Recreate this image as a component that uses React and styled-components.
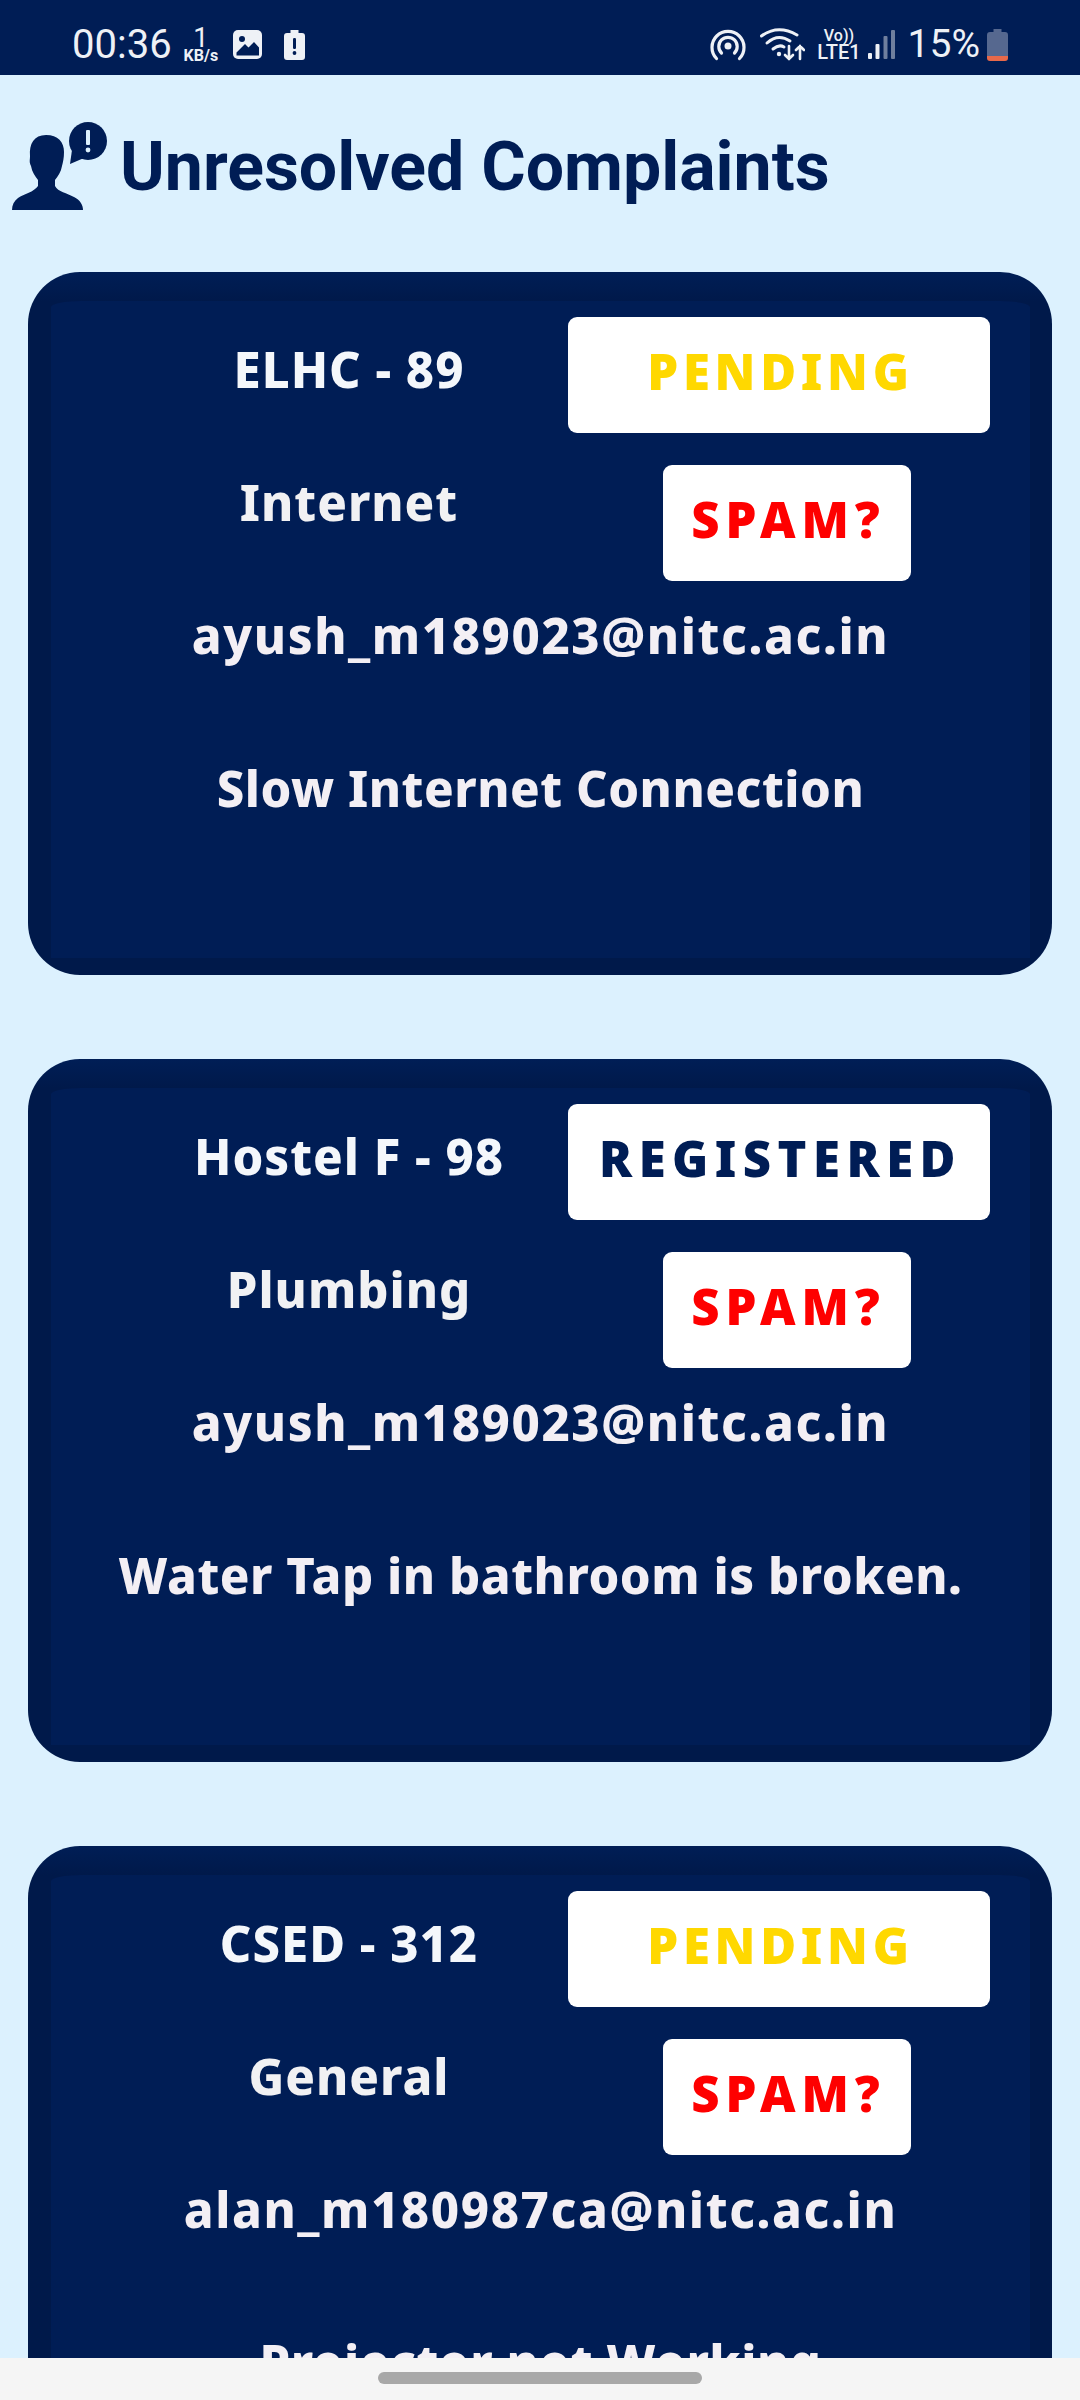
import React from 'react';
import styled, { createGlobalStyle } from 'styled-components';

const navy = '#001d55';
const sky = '#dcf1fe';
const barWhite = '#eef1f6';

const GlobalStyle = createGlobalStyle`
  html, body {
    margin: 0;
    padding: 0;
    background: ${sky};
  }
  * {
    box-sizing: border-box;
  }
`;

const Page = styled.div`
  width: 1080px;
  height: 2400px;
  overflow: hidden;
  background: ${sky};
  font-family: 'Noto Sans', sans-serif;
`;

const StatusBar = styled.div`
  height: 75px;
  background: ${navy};
  color: ${barWhite};
  display: flex;
  align-items: center;
  justify-content: space-between;
  padding: 14px 72px 0;
  font-family: Roboto, sans-serif;
`;

const StatusGroup = styled.div`
  display: flex;
  align-items: center;
`;

const Clock = styled.span`
  font-size: 40px;
  line-height: 1;
`;

const Speed = styled.div`
  display: flex;
  flex-direction: column;
  align-items: center;
  margin: 0 15px 0 12px;
`;

const SpeedValue = styled.span`
  font-size: 27px;
  line-height: 22px;
`;

const SpeedUnit = styled.span`
  font-size: 16px;
  line-height: 13px;
  font-weight: 700;
`;

const IconSlot = styled.div`
  display: flex;
  margin-left: ${(p) => p.$gap || 0}px;
`;

const Network = styled.div`
  display: flex;
  flex-direction: column;
  align-items: center;
  margin: 0 7px 0 12px;
  font-weight: 500;
`;

const NetworkTop = styled.span`
  font-size: 16px;
  line-height: 15px;
`;

const NetworkBottom = styled.span`
  font-size: 20px;
  line-height: 18px;
`;

const Percent = styled.span`
  font-size: 39px;
  line-height: 1;
  margin: 0 7px 0 13px;
`;

const Header = styled.div`
  height: 197px;
  display: flex;
  align-items: center;
  padding: 0 0 14px 12px;
  gap: 12px;
`;

const Title = styled.h1`
  margin: 0;
  font-family: Roboto, sans-serif;
  font-weight: 700;
  font-size: 68px;
  color: ${navy};
`;

const List = styled.div`
  display: flex;
  flex-direction: column;
  gap: 84px;
  padding: 0 28px;
`;

const Card = styled.div`
  height: 703px;
  background: linear-gradient(180deg, #001e56 0, #00194a 29px);
  border-radius: 52px;
  padding: 29px 22px 17px 23px;
`;

const Panel = styled.div`
  height: 100%;
  background: ${navy};
  border-radius: 30px 30px 0 0 / 6px 6px 0 0;
  padding-top: 16px;
  text-align: center;
`;

const TopGrid = styled.div`
  display: grid;
  grid-template-columns: 1fr 422px;
  grid-auto-rows: 116px;
  row-gap: 32px;
  padding: 0 40px 0 79px;
`;

const Place = styled.div`
  align-self: start;
  font-size: 49px;
  font-weight: 800;
  letter-spacing: 1px;
  line-height: 76px;
  margin-top: ${(p) => p.$offset}px;
  color: ${(p) => p.$bright ? '#f4f7fb' : '#f1f1f3'};
`;

const Badge = styled.div`
  background: #fff;
  border-radius: 9px;
  display: flex;
  align-items: center;
  justify-content: center;
  padding: 0 0 8px 3px;
  font-size: 49px;
  font-weight: 900;
  letter-spacing: ${(p) => p.$spacing}px;
  color: ${(p) => p.$color};
`;

const SpamBadge = styled(Badge)`
  width: 248px;
  margin-left: 95px;
`;

const Line = styled.div`
  font-size: 49px;
  font-weight: 800;
  letter-spacing: ${(p) => p.$spacing}px;
  line-height: 76px;
  color: #f3eff4;
  margin-top: ${(p) => p.$gap}px;
`;

const NavBar = styled.div`
  position: fixed;
  left: 0;
  right: 0;
  bottom: 0;
  height: 42px;
  background: #f5f5f5;
  display: flex;
  justify-content: center;
  padding-top: 14px;
`;

const NavPill = styled.div`
  width: 324px;
  height: 12px;
  border-radius: 6px;
  background: #a8a8a8;
`;

const PhotoIcon = () => (
  <svg width="29" height="29" viewBox="0 0 29 29">
    <rect width="29" height="29" rx="5" fill={barWhite} />
    <circle cx="9" cy="9" r="3" fill={navy} />
    <path d="M3.5 25.5 V22.5 L12 14 L15.5 17.5 L21 12 L26 17.5 V25.5 Z" fill={navy} strokeLinejoin="round" />
  </svg>
);

const AlertBatteryIcon = () => (
  <svg width="21" height="30" viewBox="0 0 21 30">
    <path d="M6.5 0 H14.5 V3 H18 Q21 3 21 6 V27 Q21 30 18 30 H3 Q0 30 0 27 V6 Q0 3 3 3 H6.5 Z" fill={barWhite} />
    <rect x="9" y="8" width="3" height="11" rx="1.2" fill={navy} />
    <circle cx="10.5" cy="23" r="1.9" fill={navy} />
  </svg>
);

const HotspotIcon = () => (
  <svg width="36" height="32" viewBox="0 0 36 32" fill="none" stroke={barWhite} strokeWidth="3.2" strokeLinecap="round">
    <circle cx="18" cy="17" r="3.5" fill={barWhite} stroke="none" />
    <path d="M11.5 24 A9.2 9.2 0 1 1 24.5 24" />
    <path d="M6.5 29.5 A16 16 0 1 1 29.5 29.5" />
  </svg>
);

const WifiIcon = () => (
  <svg width="45" height="33" viewBox="0 0 45 33" fill="none" stroke={barWhite} strokeWidth="3" strokeLinecap="round">
    <path d="M1.5 8 Q18 -4 37 7" />
    <path d="M7 15 Q18 5 30 13" />
    <path d="M13 21 Q19 16 24 19" />
    <circle cx="19" cy="26" r="2.2" fill={barWhite} stroke="none" />
    <path d="M29 18 V31 M25 27 L29 31 L33 27" strokeWidth="2.6" />
    <path d="M40 31 V18 M36 22 L40 18 L44 22" strokeWidth="2.6" />
  </svg>
);

const SignalIcon = () => (
  <svg width="27" height="29" viewBox="0 0 27 29">
    <rect x="0" y="23" width="4" height="6" rx="1" fill={barWhite} />
    <rect x="7.5" y="14" width="4" height="15" rx="1" fill={barWhite} />
    <rect x="15.5" y="6" width="4" height="23" rx="1" fill="#6f7f9e" />
    <rect x="23" y="0" width="4" height="29" rx="1" fill="#6f7f9e" />
  </svg>
);

const BatteryIcon = () => (
  <svg width="21" height="32" viewBox="0 0 21 32">
    <path d="M6.5 0 H14.5 V3 H18 Q21 3 21 6 V27 H0 V6 Q0 3 3 3 H6.5 Z" fill="#56688f" />
    <path d="M0 27 H21 V29 Q21 32 18 32 H3 Q0 32 0 29 Z" fill="#e8694a" />
  </svg>
);

// person with a speech bubble, next to the heading
const ComplaintIcon = () => (
  <svg width="96" height="89" viewBox="0 0 96 89" fill={navy}>
    <path d="M34 13 C22 13 17 22 18 34 C18 38 17 40 19 44 C20 50 23 54 26 58 V64 C22 70 12 72 6 76 C2 79 0 83 0 88 H71 C71 83 68 78 62 75 C55 71 46 70 43 64 V58 C46 54 49 50 50 44 C51 40 52 36 52 30 C52 20 46 13 34 13 Z" />
    <circle cx="76" cy="19" r="19" />
    <path d="M60 28 L58 42 L72 36 Z" />
    <rect x="74" y="8" width="4" height="15" rx="1" fill={sky} />
    <circle cx="76" cy="28" r="2.4" fill={sky} />
  </svg>
);

const statusStyles = {
  PENDING: { color: '#ffd800', spacing: 4.7 },
  REGISTERED: { color: navy, spacing: 6.5 },
};

const complaints = [
  {
    place: 'ELHC - 89',
    category: 'Internet',
    status: 'PENDING',
    email: 'ayush_m189023@nitc.ac.in',
    text: 'Slow Internet Connection',
  },
  {
    place: 'Hostel F - 98',
    category: 'Plumbing',
    status: 'REGISTERED',
    email: 'ayush_m189023@nitc.ac.in',
    text: 'Water Tap in bathroom is broken.',
  },
  {
    place: 'CSED - 312',
    category: 'General',
    status: 'PENDING',
    email: 'alan_m180987ca@nitc.ac.in',
    text: 'Projector not Working',
  },
];

const App = () => {
  return (
    <Page>
      <GlobalStyle />
      <StatusBar>
        <StatusGroup>
          <Clock>00:36</Clock>
          <Speed>
            <SpeedValue>1</SpeedValue>
            <SpeedUnit>KB/s</SpeedUnit>
          </Speed>
          <IconSlot><PhotoIcon /></IconSlot>
          <IconSlot $gap={22}><AlertBatteryIcon /></IconSlot>
        </StatusGroup>
        <StatusGroup>
          <IconSlot><HotspotIcon /></IconSlot>
          <IconSlot $gap={14}><WifiIcon /></IconSlot>
          <Network>
            <NetworkTop>Vo))</NetworkTop>
            <NetworkBottom>LTE1</NetworkBottom>
          </Network>
          <IconSlot><SignalIcon /></IconSlot>
          <Percent>15%</Percent>
          <IconSlot><BatteryIcon /></IconSlot>
        </StatusGroup>
      </StatusBar>

      <Header>
        <ComplaintIcon />
        <Title>Unresolved Complaints</Title>
      </Header>

      <List>
        {complaints.map((item) => (
          <Card key={item.place}>
            <Panel>
              <TopGrid>
                <Place $offset={14} $bright>{item.place}</Place>
                <Badge $spacing={statusStyles[item.status].spacing} $color={statusStyles[item.status].color}>
                  {item.status}
                </Badge>
                <Place $offset={-1}>{item.category}</Place>
                <SpamBadge $spacing={6} $color="#fe0000">SPAM?</SpamBadge>
              </TopGrid>
              <Line $gap={16} $spacing={1.6}>{item.email}</Line>
              <Line $gap={77} $spacing={0.55}>{item.text}</Line>
            </Panel>
          </Card>
        ))}
      </List>

      <NavBar>
        <NavPill />
      </NavBar>
    </Page>
  );
};

export default App;
